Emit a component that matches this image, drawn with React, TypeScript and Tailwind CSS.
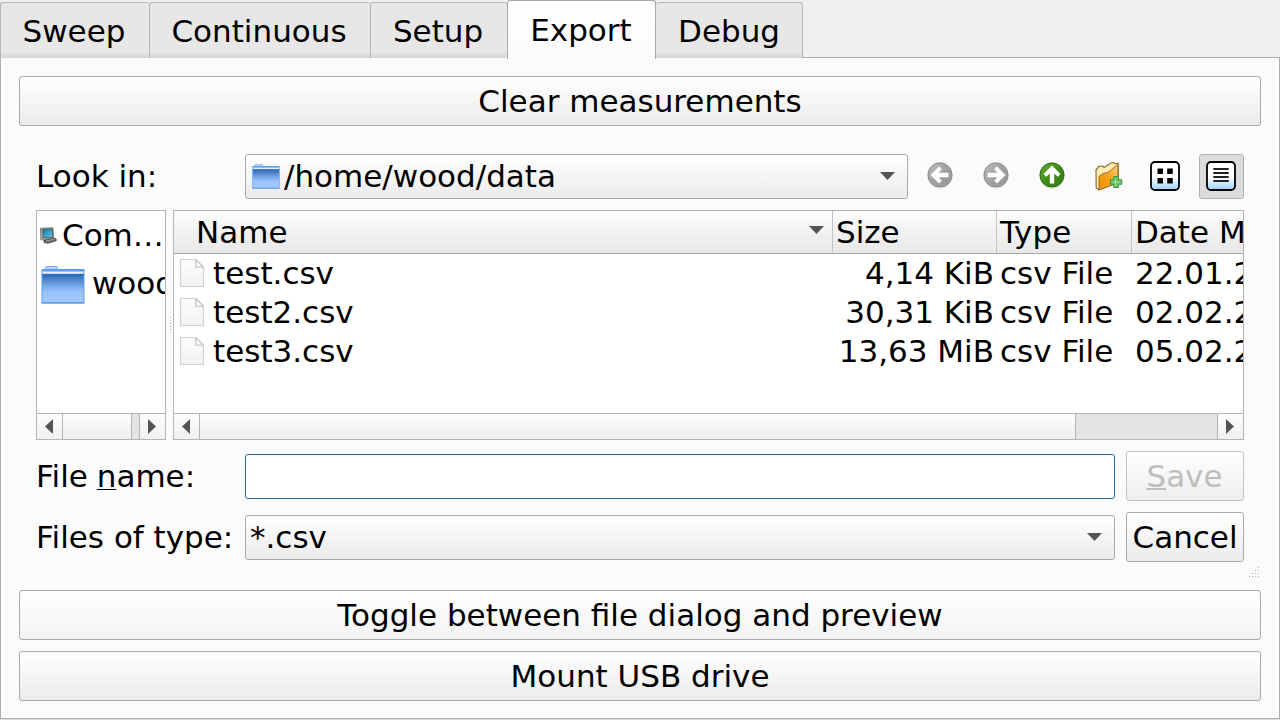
import type { ReactNode } from "react";

const tabs = [
  { label: "Sweep", box: "w-[149px] border-l pr-[2px]" },
  { label: "Continuous", box: "w-[221px] border-l pr-[2px]" },
  { label: "Setup", box: "w-[137px] border-l pr-[2px]" },
  { label: "Export", box: "w-[149px] pr-px", active: true },
  { label: "Debug", box: "w-[147px] border-r" },
];

const files = [
  { name: "test.csv", size: "4,14 KiB", type: "csv File", date: "22.01.2" },
  { name: "test2.csv", size: "30,31 KiB", type: "csv File", date: "02.02.2" },
  { name: "test3.csv", size: "13,63 MiB", type: "csv File", date: "05.02.2" },
];

function Button({ children, className = "" }: { children: ReactNode; className?: string }) {
  return (
    <button
      className={`flex h-[50px] shrink-0 items-center justify-center rounded-[3px] border bg-linear-to-b from-white to-[#ebebeb] ${className}`}
    >
      <span>{children}</span>
    </button>
  );
}

function Mnemonic({ children, className }: { children: ReactNode; className: string }) {
  return <span className={`-ml-px underline [text-decoration-skip-ink:none] ${className}`}>{children}</span>;
}

function ArrowDown({ className = "" }: { className?: string }) {
  return (
    <svg width="15" height="8" viewBox="0 0 15 8" className={`shrink-0 ${className}`}>
      <path d="M0 0H15L7.5 8Z" fill="#545454" />
    </svg>
  );
}

function ArrowSide({ right = false }: { right?: boolean }) {
  return (
    <svg width="8" height="15" viewBox="0 0 8 15" className="shrink-0">
      <path d={right ? "M0 0V15L8 7.5Z" : "M8 0V15L0 7.5Z"} fill="#545454" />
    </svg>
  );
}

function Folder({ width, height, className = "" }: { width: number; height: number; className?: string }) {
  return (
    <svg
      width={width}
      height={height}
      viewBox="0 0 44 38"
      preserveAspectRatio="none"
      className={`shrink-0 ${className}`}
    >
      <defs>
        <linearGradient id="folder" x1="0" y1="0" x2="0" y2="1">
          <stop offset="0" stopColor="#2c67b4" />
          <stop offset="0.5" stopColor="#82b1f0" />
          <stop offset="0.65" stopColor="#99c2fa" />
          <stop offset="1" stopColor="#a2c9fc" />
        </linearGradient>
      </defs>
      <path d="M4.5 4V1.5Q4.500 .5 5.500 .5H15.500Q16.500 .5 16.500 1.500V4" fill="#b9d5f8" stroke="#78aaf0" />
      <rect x="0.500" y="3" width="43" height="34" rx="1" fill="#5c9df0" />
      <rect x="1.500" y="5.500" width="41" height="2.200" fill="#e6f0fc" />
      <rect x="1.500" y="8" width="41" height="28" fill="url(#folder)" />
      <path d="M.5 37H43.5" stroke="#5b9df2" strokeWidth="1.500" />
    </svg>
  );
}

function Computer() {
  return (
    <svg width="17" height="17" viewBox="0 0 17 17" className="shrink-0">
      <defs>
        <linearGradient id="screen" x1="0" y1="0" x2="1" y2="1">
          <stop offset="0" stopColor="#0e76a4" />
          <stop offset="1" stopColor="#5ccdf0" />
        </linearGradient>
      </defs>
      <path d="M.5 1.200L13 .7L13.500 11L4 13.200L.8 12.600Z" fill="#aaaaa4" stroke="#5f5f5a" strokeWidth=".7" />
      <path d="M2.600 2.300L12.300 2L12.500 10L3.400 11Z" fill="url(#screen)" stroke="#3c3c3a" strokeWidth=".6" />
      <path d="M4 13.600L14.500 11L16.200 12V13.800L7.500 16.300L4 15.400Z" fill="#6c6c68" stroke="#30302e" strokeWidth=".7" />
      <path d="M6 14L15 11.900" stroke="#b4b4b0" strokeWidth=".8" />
    </svg>
  );
}

function FileIcon() {
  return (
    <svg width="26" height="30" viewBox="0 0 26 30" className="shrink-0">
      <defs>
        <linearGradient id="paper" x1="0" y1="0" x2="0" y2="1">
          <stop offset="0" stopColor="#fdfdfd" />
          <stop offset="1" stopColor="#f0f2f2" />
        </linearGradient>
      </defs>
      <path
        d="M1.500 1.500H17L24.500 9V28.500H1.500Z"
        fill="url(#paper)"
        stroke="#d2d2d2"
        strokeWidth="1.200"
        strokeLinejoin="round"
      />
      <path d="M15 2.200C16.200 5 16.500 8 15.500 11C18 9.800 21 9.600 24 10.500V9L17 2Z" fill="#e4e4e4" />
      <path d="M17.200 2.200V9H24Z" fill="#fff" stroke="#c8c8c8" strokeWidth="1.100" strokeLinejoin="round" />
    </svg>
  );
}

function RoundArrow({ dir, enabled = false }: { dir: "left" | "right" | "up"; enabled?: boolean }) {
  const turn = { left: "", right: "rotate(180 13 13)", up: "rotate(90 13 13)" }[dir];
  const id = `disc-${dir}`;
  return (
    <svg width="26" height="27" viewBox="0 0 26 27" className="mb-px shrink-0">
      <defs>
        <linearGradient id={id} x1="0" y1="0" x2="1" y2="1">
          <stop offset="0" stopColor={enabled ? "#69b03a" : "#bdbdbd"} />
          <stop offset="0.500" stopColor={enabled ? "#3d8f14" : "#a2a2a2"} />
          <stop offset="1" stopColor={enabled ? "#37791a" : "#949494"} />
        </linearGradient>
      </defs>
      <ellipse cx="13" cy="13.300" rx="12.800" ry="13.200" fill={enabled ? "#cfe3c4" : "#dddddd"} />
      <circle cx="13" cy="13" r="12" fill={`url(#${id})`} stroke={enabled ? "#2f6d12" : "#8c8c8c"} />
      <path
        transform={turn}
        d="M3.500 13L12 4.500L14.800 7.300L11.500 10.800H21.500V15.200H11.500L14.800 18.700L12 21.500Z"
        fill="#fff"
      />
    </svg>
  );
}

function NewFolder() {
  return (
    <svg width="28" height="30" viewBox="0 0 28 30" className="shrink-0">
      <defs>
        <linearGradient id="amber" x1="1" y1="0" x2="0" y2="1">
          <stop offset="0" stopColor="#ffd27c" />
          <stop offset="0.500" stopColor="#f4a21c" />
          <stop offset="1" stopColor="#ee8f00" />
        </linearGradient>
      </defs>
      <path
        d="M1 9L4 5.500L8 5L9 6.500L16 2L19 1.500L20 3L23 2L23.500 20L4 29L1.200 27Z"
        fill="#fbeeb0"
        stroke="#8f6a45"
        strokeWidth="1.200"
        strokeLinejoin="round"
      />
      <path
        d="M4 28.800V15.500L8 12.500L13 11.500L23 3.500V22L8 27.500Z"
        fill="url(#amber)"
        stroke="#94611f"
        strokeWidth=".9"
        strokeLinejoin="round"
      />
      <path
        d="M18.700 15.500H23.300V18.700H26.800V23.300H23.300V26.500H18.700V23.300H15.500V18.700H18.700Z"
        fill="#6cc469"
        stroke="#3c9a3c"
        strokeLinejoin="round"
      />
      <path d="M20.500 17.500V24.500M17.500 21H24.500" stroke="#a2dfa0" />
    </svg>
  );
}

function ViewIcon({ list = false }: { list?: boolean }) {
  const id = list ? "view-list" : "view-grid";
  return (
    <svg width="30" height="30" viewBox="0 0 30 30" className="shrink-0">
      <defs>
        <linearGradient id={id} x1="0" y1="0" x2="0" y2="1">
          <stop offset="0" stopColor="#fff" />
          <stop offset="0.550" stopColor="#fff" />
          <stop offset="1" stopColor="#9bcdf8" />
        </linearGradient>
      </defs>
      <rect x="1" y="1" width="28" height="28" rx="4" fill={`url(#${id})`} stroke="#000" strokeWidth="1.800" />
      {list ? (
        <path d="M7.300 8H22.700M7.300 12H22.700M7.300 16H22.700M7.300 20H22.700" stroke="#222" strokeWidth="2.200" />
      ) : (
        <path d="M7.500 7.500H13V13H7.500ZM17.200 7.500H22.800V13H17.200ZM7.500 17H13V22.500H7.500ZM17.200 17H22.800V22.500H17.200Z" />
      )}
    </svg>
  );
}

function ScrollBar({ handle }: { handle: string }) {
  return (
    <div className="flex h-[26px] shrink-0 border-t border-[#b4b4b4] bg-[#e4e4e4]">
      <div className="flex w-[26px] shrink-0 items-center border-r border-[#b4b4b4] bg-linear-to-b from-[#fdfdfd] to-[#f0f0f0] pl-2">
        <ArrowSide />
      </div>
      <div className={`shrink-0 border-r border-[#b4b4b4] bg-linear-to-b from-[#fdfdfd] to-[#efefef] ${handle}`} />
      <div className="flex-1" />
      <div className="flex w-[26px] shrink-0 items-center border-l border-[#b4b4b4] bg-linear-to-b from-[#fdfdfd] to-[#f0f0f0] pl-2">
        <ArrowSide right />
      </div>
    </div>
  );
}

function SizeGrip() {
  const dots = [
    [9, 0],
    [6, 3],
    [9, 3],
    [3, 6],
    [6, 6],
    [9, 6],
    [0, 9],
    [3, 9],
    [6, 9],
    [9, 9],
  ];
  return (
    <svg width="10" height="10" viewBox="0 0 10 10" shapeRendering="crispEdges">
      {dots.map(([x, y]) => (
        <rect key={`${x}-${y}`} x={x} y={y} width="1" height="1" fill="#b4b4b4" />
      ))}
    </svg>
  );
}

export default function App() {
  return (
    <div className="flex h-[720px] w-[1280px] flex-col overflow-hidden bg-[#efefef] font-['DejaVu_Sans',sans-serif] text-[31px] leading-[36px] whitespace-nowrap text-black">
      <div className="flex h-[58px] shrink-0 items-end">
        {tabs.map((t) =>
          t.active ? (
            <div
              key={t.label}
              className={`z-10 -mb-px flex h-[59px] shrink-0 justify-center rounded-t-[3px] border border-b-0 border-[#a9a9a9] bg-linear-to-b from-white to-[#fbfbfb] pt-[11px] ${t.box}`}
            >
              {t.label}
            </div>
          ) : (
            <div
              key={t.label}
              className={`flex h-14 shrink-0 justify-center rounded-t-[3px] border-t border-[#b7b7b7] bg-[linear-gradient(#e7e7e7_88%,#d6d6d6)] pt-[10px] ${t.box}`}
            >
              {t.label}
            </div>
          ),
        )}
        <div className="h-px flex-1 bg-[#adadad]" />
      </div>

      <div className="flex h-[661px] shrink-0 flex-col border-x border-b border-[#adadad] bg-[#fbfbfb] px-[18px] pt-[18px]">
        <Button className="border-[#aaaaaa]">Clear measurements</Button>

        <div className="mt-7 flex h-[464px] shrink-0 flex-col px-[17px]">
          <div className="flex h-[45px] shrink-0 items-center">
            <span className="w-[209px] shrink-0 pb-px">Look in:</span>
            <div className="flex h-[45px] w-[663px] shrink-0 items-center rounded-[3px] border border-[#aaaaaa] bg-linear-to-b from-white to-[#ebebeb] pb-px pl-[6px]">
              <Folder width={28} height={25} className="mt-px" />
              <span className="pl-1">/home/wood/data</span>
              <ArrowDown className="mr-[12px] ml-auto" />
            </div>
            <div className="flex h-[45px] flex-1 items-center pb-px pl-[19px]">
              <RoundArrow dir="left" />
              <span className="w-[30px]" />
              <RoundArrow dir="right" />
              <span className="w-[30px]" />
              <RoundArrow dir="up" enabled />
              <span className="w-[30px]" />
              <NewFolder />
              <span className="w-[27px]" />
              <ViewIcon />
              <div className="ml-auto flex size-[45px] items-center justify-center self-start rounded-[3px] border border-[#b0b0b0] bg-[#dcdcdc] pr-px pb-px">
                <ViewIcon list />
              </div>
            </div>
          </div>

          <div className="mt-[11px] flex h-[230px] shrink-0">
            <div className="flex w-[130px] shrink-0 flex-col overflow-hidden border border-[#b4b4b4] bg-white">
              <div className="flex h-12 shrink-0 items-center pl-[3px]">
                <Computer />
                <span className="pl-[5px]">Com…</span>
              </div>
              <div className="flex h-12 shrink-0 items-center overflow-hidden pl-1">
                <Folder width={44} height={38} className="mt-[3px]" />
                <span className="pl-[7px]">wood</span>
              </div>
              <div className="flex-1" />
              <ScrollBar handle="w-[69px]" />
            </div>

            <div className="flex w-[7px] shrink-0 items-center pl-[4px]">
              <svg width="1" height="17" viewBox="0 0 1 17" shapeRendering="crispEdges">
                <path d="M.5 0V17" stroke="#adadad" strokeDasharray="1 2" />
              </svg>
            </div>

            <div className="flex w-[1071px] shrink-0 flex-col overflow-hidden border border-[#b4b4b4] bg-white">
              <div className="flex h-[43px] shrink-0 items-stretch border-b border-[#aaaaaa] bg-linear-to-b from-[#fcfcfc] to-[#e8e8e8] leading-[42px]">
                <div className="flex w-[659px] shrink-0 items-center justify-between border-r border-[#c4c4c4] pr-[8px] pl-[22px]">
                  Name
                  <ArrowDown className="mb-1" />
                </div>
                <div className="w-[164px] shrink-0 border-r border-[#c4c4c4] pl-[3px]">Size</div>
                <div className="w-[135px] shrink-0 border-r border-[#c4c4c4] pl-[3px]">Type</div>
                <div className="flex-1 overflow-hidden pl-[3px]">Date M</div>
              </div>
              {files.map((f) => (
                <div key={f.name} className="flex h-[39px] shrink-0 items-center pb-px">
                  <div className="flex w-[659px] shrink-0 items-center pl-[5px]">
                    <FileIcon />
                    <span className="pl-[8px]">{f.name}</span>
                  </div>
                  <div className="w-[164px] shrink-0 pr-[3px] text-right">{f.size}</div>
                  <div className="w-[135px] shrink-0 pl-[3px]">{f.type}</div>
                  <div className="flex-1 overflow-hidden pl-[3px]">{f.date}</div>
                </div>
              ))}
              <div className="flex-1" />
              <ScrollBar handle="w-[876px]" />
            </div>
          </div>

          <div className="mt-[11px] flex h-[50px] shrink-0 items-center">
            <label className="w-[209px] shrink-0">
              File <Mnemonic className="decoration-1 underline-offset-[2px]">n</Mnemonic>ame:
            </label>
            <input
              aria-label="File name"
              className="mt-px h-[45px] w-[870px] shrink-0 rounded-[3px] border border-[#21699c] bg-white px-1 outline-none"
            />
            <Button className="ml-[11px] w-[118px] border-[#c3c3c3] to-[#eeeeee] text-[#bebebe]">
              <Mnemonic className="decoration-2 underline-offset-[1px]">S</Mnemonic>ave
            </Button>
          </div>

          <div className="mt-[11px] flex h-[50px] shrink-0 items-center">
            <span className="w-[209px] shrink-0">Files of type:</span>
            <div className="mt-px flex h-[45px] w-[870px] shrink-0 items-center justify-between rounded-[3px] border border-[#aaaaaa] bg-linear-to-b from-white to-[#ebebeb] pr-[12px] pb-px pl-1">
              <span>*.csv</span>
              <ArrowDown />
            </div>
            <Button className="ml-[11px] w-[118px] border-[#aaaaaa]">Cancel</Button>
          </div>

          <div className="-mr-[15px] flex justify-end pt-[5px]">
            <SizeGrip />
          </div>
        </div>

        <div className="-mt-[28px] flex flex-col gap-[11px]">
          <Button className="border-[#aaaaaa] to-[#f3f3f3]">Toggle between file dialog and preview</Button>
          <Button className="border-[#aaaaaa]">Mount USB drive</Button>
        </div>
      </div>
      <div className="h-px bg-[#dddddd]" />
    </div>
  );
}
